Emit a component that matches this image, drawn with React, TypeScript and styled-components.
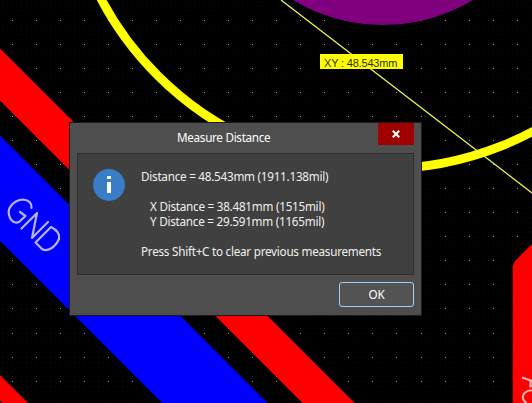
import React from "react";
import styled, { createGlobalStyle } from "styled-components";

const Global = createGlobalStyle`
  html, body { margin: 0; background: #000; overflow: hidden; }
  * { box-sizing: border-box; }
`;

const Board = styled.main`
  position: relative;
  width: 532px;
  height: 403px;
  overflow: hidden;
  background: #000;
`;

const Drawing = styled.svg`
  display: block;
`;

const MeasureTag = styled.div`
  position: absolute;
  left: 320px;
  top: 54px;
  width: 83px;
  height: 15px;
  padding-left: 4px;
  background: #ff0;
  color: #2e2e00;
  font: 11px/19px "Liberation Sans", Arial, sans-serif;
  letter-spacing: -0.18px;
  white-space: pre;
`;

const Dialog = styled.section`
  position: absolute;
  left: 69px;
  top: 122px;
  width: 353px;
  height: 194px;
  display: flex;
  flex-direction: column;
  padding: 0 7px;
  border: 1px solid #1c1c1c;
  background: #4e4e4e;
  color: #f0f0f0;
  font: 11.7px/15px "Noto Sans", "Open Sans", sans-serif;
  letter-spacing: -0.25px;
`;

const TitleBar = styled.header`
  display: flex;
  height: 30px;
`;

const Title = styled.h1`
  flex: 1;
  margin: 0 0 0 100px;
  padding-top: 7px;
  font-size: 11.7px;
  font-weight: 400;
  line-height: 15px;
  letter-spacing: -0.3px;
  color: #fff;
`;

const CloseButton = styled.button`
  display: grid;
  place-items: center;
  width: 36px;
  height: 22px;
  padding: 0;
  border: 0;
  background: #a00000;
`;

const Content = styled.div`
  display: flex;
  height: 122px;
  padding: 15px 0 0 15px;
  border: 1px solid #2d2d2d;
  background: #404040;
`;

const Message = styled.div`
  display: flex;
  flex-direction: column;
  margin-left: 16px;
`;

const Line = styled.span<{ $indent?: boolean; $gap?: boolean }>`
  height: 15px;
  margin-top: ${(p) => (p.$gap ? 15 : 0)}px;
  padding-left: ${(p) => (p.$indent ? 9 : 0)}px;
  white-space: nowrap;
`;

const Footer = styled.footer`
  display: flex;
  justify-content: flex-end;
  padding-top: 7px;
`;

const OkButton = styled.button`
  width: 75px;
  height: 25px;
  padding: 0;
  border: 1px solid #99d1ff;
  border-radius: 3px;
  background: #535353;
  color: #fff;
  font: 11.7px/15px "Noto Sans", "Open Sans", sans-serif;
  letter-spacing: -0.24px;
`;

const xs = Array.from({ length: 22 }, (_, i) => Math.floor(12 + i * 24.06));
const ys = Array.from({ length: 16 }, (_, i) => Math.floor(20 + i * 24.08));

export default function App() {
  return (
    <>
      <Global />
      <Board>
        <Drawing width="532" height="403" viewBox="0 0 532 403">
          <defs>
            <pattern id="fine" x="2" y="1" width="4.81" height="4.81" patternUnits="userSpaceOnUse">
              <rect width="1" height="1" fill="#0c0c0c" />
            </pattern>
          </defs>
          <rect width="532" height="403" fill="url(#fine)" />
          {ys.map((y) => xs.map((x) => <rect key={`${x}-${y}`} x={x} y={y} width="1" height="1" fill="#999" />))}
          <path d="M0 48.5 354.5 403H302.5L0 100.5ZM0 375 28 403H2L0 401Z" fill="#f00" />
          <path d="M0 135.5 267.5 403H162.2L0 240.8Z" fill="#00f" />
          <path d="M532 244 516 260Q512.7 263.5 512.7 268V403H532Z" fill="#f00" />
          <circle cx="383" cy="-149.5" r="174.5" fill="#800080" />
          <circle cx="383" cy="-150" r="318.8" fill="none" stroke="#ff0" strokeWidth="8.7" />
          <path d="M281 0 532 193" stroke="#ffff4d" strokeWidth="1.2" />
          <g fill="none" stroke="#b5b5ff" strokeWidth="2.2" strokeLinecap="round" strokeLinejoin="round">
            <path d="M31.500 208C32 202 28 200 23 199.500C14 200 7 208 9 215C10 220 14 224 19 222L25.500 216L20 212" />
            <path d="M21.500 228.500 37 213 32 238 48 222" />
            <path d="M35.500 242.500 51 227C57 230 60 234 59 239C55 248 47 252 42 249Z" />
          </g>
          <g fill="none" stroke="#ffb8b8" strokeWidth="2">
            <path d="M522 377.500 534 381.500M530.500 381V386.500L534 385.500" />
            <path d="M534 390.500C526 389.500 521 394.500 523.500 400L527 404" />
          </g>
        </Drawing>
        <MeasureTag>XY : 48.543mm</MeasureTag>
        <Dialog role="dialog">
          <TitleBar>
            <Title>Measure Distance</Title>
            <CloseButton aria-label="Close">
              <svg width="8" height="8" viewBox="0 0 8 8">
                <path d="M.8.8 7.200 7.200M7.200.8.8 7.200" stroke="#fff" strokeWidth="2.100" />
              </svg>
            </CloseButton>
          </TitleBar>
          <Content>
            <svg width="32" height="32" viewBox="0 0 32 32">
              <circle cx="16" cy="16" r="15.900" fill="#397dc6" />
              <path d="M14 7h4v3h-4zM14 13h4v11h-4z" fill="#fff" />
            </svg>
            <Message>
              <Line>Distance = 48.543mm (1911.138mil)</Line>
              <Line $gap $indent>X Distance = 38.481mm (1515mil)</Line>
              <Line $indent>Y Distance = 29.591mm (1165mil)</Line>
              <Line $gap>Press Shift+C to clear previous measurements</Line>
            </Message>
          </Content>
          <Footer>
            <OkButton>OK</OkButton>
          </Footer>
        </Dialog>
      </Board>
    </>
  );
}
